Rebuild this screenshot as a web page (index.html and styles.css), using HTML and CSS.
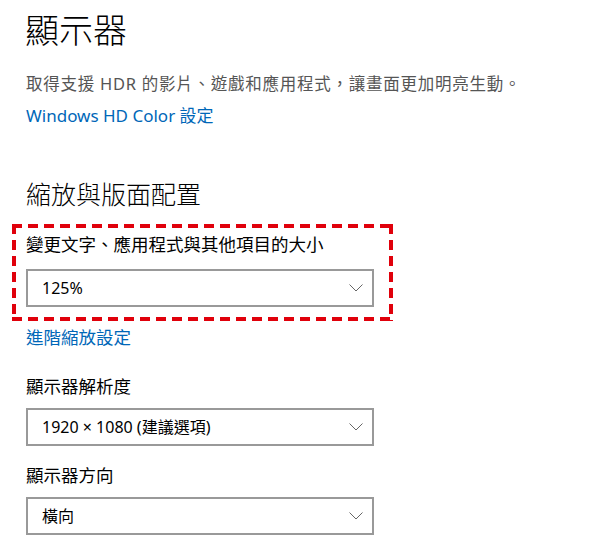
FILE: index.html
```html
<!DOCTYPE html>
<html>
  <head>
    <meta charset="utf-8">
    <title>顯示器</title>
    <link rel="stylesheet" href="styles.css">
  </head>
  <body>
    <div class="page">
      <h1 class="title">顯示器</h1>
      <p class="desc">取得支援 HDR 的影片、遊戲和應用程式，讓畫面更加明亮生動。</p>
      <a class="link hdr-link" href="#">Windows HD Color 設定</a>

      <h2 class="section">縮放與版面配置</h2>

      <div class="highlight">
        <div class="label">變更文字、應用程式與其他項目的大小</div>
        <div class="select scale-select">
          <span>125%</span>
          <svg class="chevron" width="14" height="8" viewBox="0 0 14 8">
            <polyline points="0.5,0.5 7,7 13.5,0.5" fill="none" stroke="#666" stroke-width="1"/>
          </svg>
        </div>
      </div>
      <a class="link scale-link" href="#">進階縮放設定</a>

      <div class="label res-label">顯示器解析度</div>
      <div class="select">
        <span>1920 × 1080 (建議選項)</span>
        <svg class="chevron" width="14" height="8" viewBox="0 0 14 8">
          <polyline points="0.5,0.5 7,7 13.5,0.5" fill="none" stroke="#666" stroke-width="1"/>
        </svg>
      </div>

      <div class="label orient-label">顯示器方向</div>
      <div class="select">
        <span>橫向</span>
        <svg class="chevron" width="14" height="8" viewBox="0 0 14 8">
          <polyline points="0.5,0.5 7,7 13.5,0.5" fill="none" stroke="#666" stroke-width="1"/>
        </svg>
      </div>
    </div>
  </body>
</html>
```

FILE: styles.css
```css
body {
  margin: 0;
  background-color: #fff;
  font-family: "Noto Sans", "Noto Sans CJK TC", sans-serif;
  color: #000;
}
.page {
  padding: 10px 0 0 26px;
  width: 348px;
}
.title {
  font-size: 34px;
  font-weight: 300;
  line-height: 40px;
  margin: 0 0 0 -1px;
  white-space: nowrap;
}
.desc {
  font-size: 16.5px;
  letter-spacing: 0.75px;
  line-height: 20px;
  color: #555;
  margin: 24px 0 0 0;
  white-space: nowrap;
}
.link {
  display: block;
  color: #0067b8;
  text-decoration: none;
  line-height: 22px;
  white-space: nowrap;
}
.hdr-link {
  font-size: 17px;
  margin-top: 11px;
}
.section {
  font-size: 25px;
  font-weight: 300;
  line-height: 32px;
  margin: 51px 0 0 0;
  white-space: nowrap;
}
/* red dashed frame round the scale setting */
.highlight {
  margin: 14px 0 0 -14px;
  width: 381px;
  box-sizing: border-box;
  padding: 9px 0 14px 14px;
  background:
    repeating-linear-gradient(90deg, #e0000b 0 10px, transparent 10px 16px) top left / 100% 4px no-repeat,
    repeating-linear-gradient(90deg, #e0000b 0 10px, transparent 10px 16px) bottom left / 100% 4px no-repeat,
    repeating-linear-gradient(180deg, #e0000b 0 10px, transparent 10px 16px) top left / 4px 100% no-repeat,
    repeating-linear-gradient(180deg, #e0000b 0 10px, transparent 10px 16px) top right / 4px 100% no-repeat;
}
.label {
  font-size: 17.5px;
  line-height: 22px;
  white-space: nowrap;
}
.select {
  display: flex;
  align-items: center;
  justify-content: space-between;
  height: 38px;
  width: 348px;
  border: 2px solid #999;
  padding: 0 0 0 14px;
  box-sizing: border-box;
  font-size: 16px;
  margin-top: 11px;
}
.select span {
  line-height: 22px;
}
.scale-select {
  margin-top: 14px;
}
.chevron {
  margin-right: 9px;
}
.scale-link {
  font-size: 17.5px;
  margin-top: 5px;
}
.res-label {
  margin-top: 27px;
}
.orient-label {
  margin-top: 18px;
}
```
